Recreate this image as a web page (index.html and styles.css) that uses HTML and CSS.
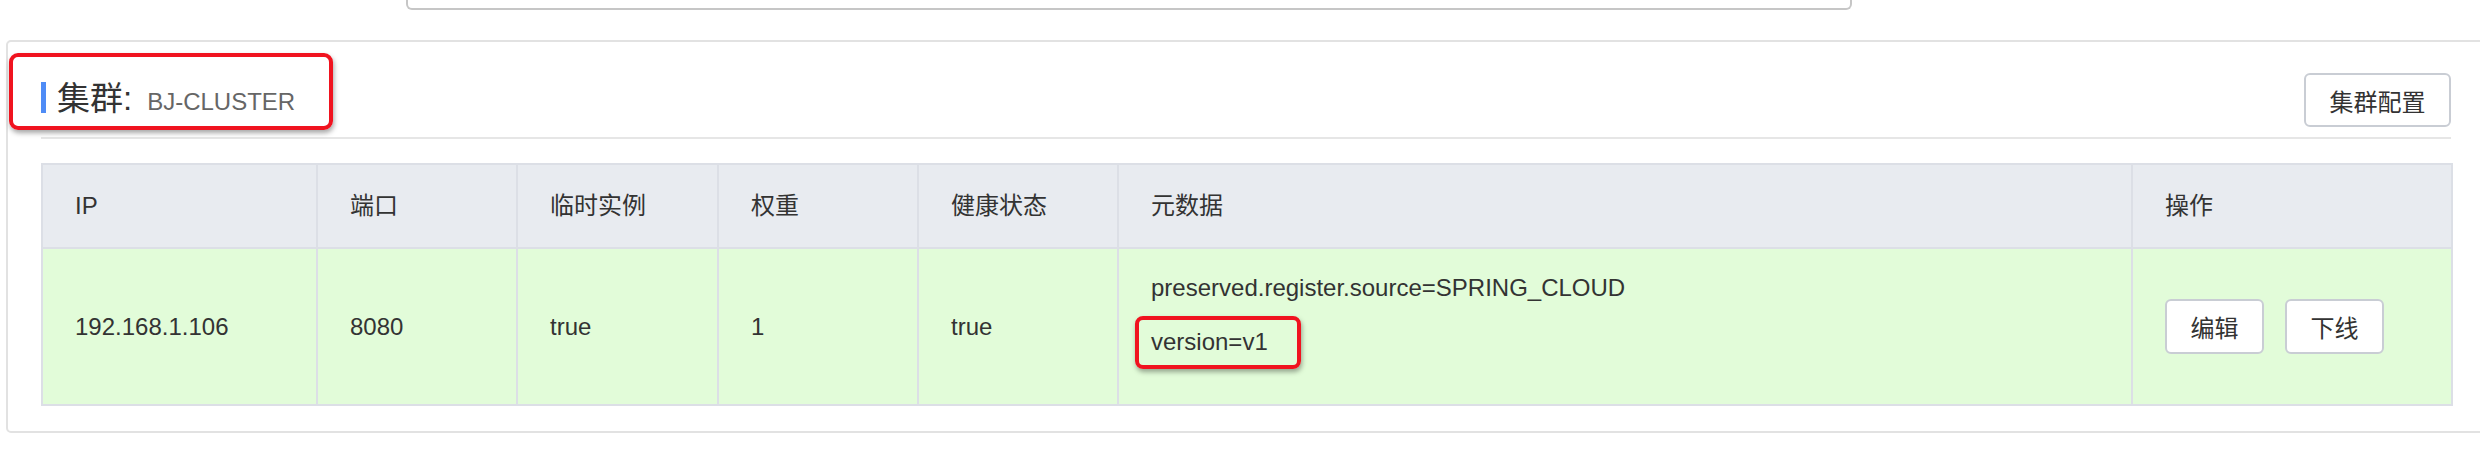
FILE: index.html
```html
<!DOCTYPE html>
<html lang="zh-CN">
<head>
<meta charset="utf-8">
<title>集群</title>
<link rel="stylesheet" href="styles.css">
</head>
<body>
<div class="page">
  <div class="search"></div>
  <section class="card">
    <div class="annot-title"></div>
    <div class="card-head">
      <div class="title">
        <span class="bar"></span>
        <span class="title-text"><span class="title-label">集群:</span><span class="title-name">BJ-CLUSTER</span></span>
      </div>
      <button class="btn btn-config">集群配置</button>
    </div>
    <div class="sep"></div>
    <table class="grid">
      <colgroup>
        <col class="c-ip"><col class="c-port"><col class="c-eph"><col class="c-weight"><col class="c-health"><col class="c-meta"><col class="c-ops">
      </colgroup>
      <thead>
        <tr><th>IP</th><th>端口</th><th>临时实例</th><th>权重</th><th>健康状态</th><th>元数据</th><th>操作</th></tr>
      </thead>
      <tbody>
        <tr>
          <td>192.168.1.106</td>
          <td>8080</td>
          <td>true</td>
          <td>1</td>
          <td>true</td>
          <td class="meta">
            <div class="meta-line">preserved.register.source=SPRING_CLOUD</div>
            <div class="meta-line"><span class="mark">version=v1</span></div>
          </td>
          <td>
            <div class="ops">
              <button class="btn btn-sm">编辑</button>
              <button class="btn btn-sm">下线</button>
            </div>
          </td>
        </tr>
      </tbody>
    </table>
  </section>
</div>
</body>
</html>
```

FILE: styles.css
```css
html, body {
  margin: 0;
  padding: 0;
  background: #ffffff;
  overflow: hidden;
}
body {
  font-family: "Liberation Sans", "Noto Sans CJK SC", sans-serif;
  color: #333333;
}
.page {
  width: 2500px;
}
.search {
  margin-left: 406px;
  width: 1446px;
  height: 10px;
  box-sizing: border-box;
  border: 2px solid #c6c6c6;
  border-top: 0;
  border-radius: 0 0 6px 6px;
}
.card {
  position: relative;
  margin: 30px 0 0 6px;
  width: 2492px;
  box-sizing: border-box;
  border: 2px solid #e2e2e2;
  border-radius: 5px;
  padding: 31px 45px 25px 33px;
}
.annot-title {
  position: absolute;
  left: 1px;
  top: 11px;
  width: 324px;
  height: 77px;
  box-sizing: border-box;
  border: 4px solid #f0131f;
  border-radius: 9px;
  box-shadow: 1px 3px 5px rgba(0, 0, 0, 0.35);
}
.card-head {
  display: flex;
  align-items: center;
  justify-content: space-between;
  height: 54px;
}
.title {
  display: flex;
  align-items: center;
}
.bar {
  width: 5px;
  height: 31px;
  margin-bottom: 5px;
  background: #4f8cf6;
  margin-right: 11px;
}
.title-text {
  display: flex;
  align-items: baseline;
  line-height: 40px;
}
.title-label {
  font-size: 33px;
  color: #333333;
}
.title-name {
  font-size: 24px;
  color: #666666;
  margin-left: 15px;
}
.btn {
  box-sizing: border-box;
  background: #ffffff;
  border: 2px solid #c9cdd4;
  border-radius: 6px;
  font-family: "Liberation Sans", "Noto Sans CJK SC", sans-serif;
  font-size: 24px;
  color: #333333;
  padding: 0;
}
.btn-config {
  width: 147px;
  height: 54px;
}
.sep {
  height: 2px;
  background: #e6e6e6;
  margin-top: 10px;
}
.grid {
  margin-top: 24px;
  width: 2410px;
  table-layout: fixed;
  border-collapse: collapse;
}
.c-ip { width: 275px; }
.c-port { width: 200px; }
.c-eph { width: 201px; }
.c-weight { width: 200px; }
.c-health { width: 200px; }
.c-meta { width: 1014px; }
.c-ops { width: 320px; }
.grid th,
.grid td {
  border: 2px solid #dcdfe6;
  text-align: left;
  padding: 0 0 0 32px;
  font-size: 24px;
  font-weight: normal;
  line-height: 36px;
  color: #333333;
}
.grid thead tr {
  height: 84px;
}
.grid th {
  background: #e8ebf0;
}
.grid tbody tr {
  height: 157px;
}
.grid td {
  background: #e2fcd9;
}
.meta-line {
  line-height: 36px;
  margin-bottom: 18px;
}
.meta-line:last-child {
  margin-bottom: 24px;
}
.mark {
  position: relative;
}
.mark::after {
  content: "";
  position: absolute;
  left: -16px;
  right: -33px;
  top: -12px;
  bottom: -14px;
  border: 4px solid #f0131f;
  border-radius: 8px;
  box-shadow: 1px 3px 5px rgba(0, 0, 0, 0.35);
}
.ops {
  display: flex;
  gap: 21px;
}
.btn-sm {
  width: 99px;
  height: 55px;
}
```
